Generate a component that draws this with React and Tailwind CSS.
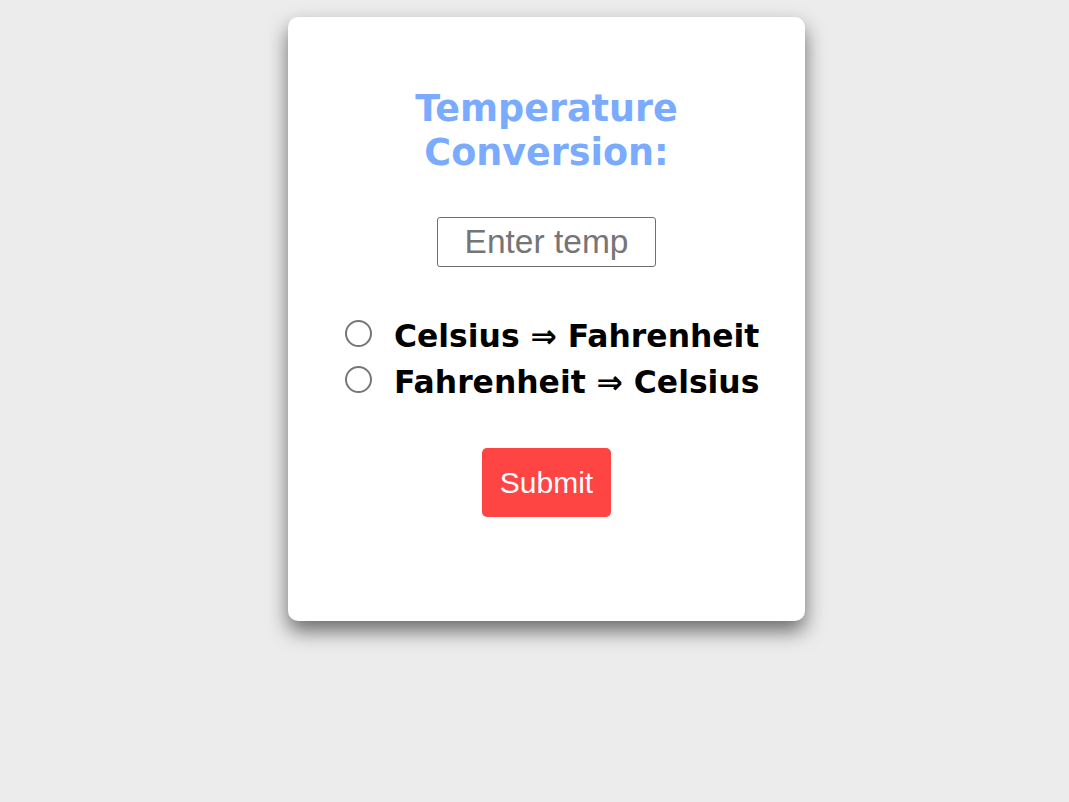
import React, { useState } from "react";

const options = [
  { id: "c2f", label: "Celsius ⇒ Fahrenheit" },
  { id: "f2c", label: "Fahrenheit ⇒ Celsius" },
];

const App = () => {
  const [temp, setTemp] = useState("");
  const [mode, setMode] = useState("");

  return (
    <div className="min-h-screen bg-[#ececec] pt-[17px] pl-[24px] flex justify-center items-start">
      <div className="w-[517px] bg-white rounded-[10px] shadow-[0_10px_20px_rgba(0,0,0,0.55)] pt-[70px] pb-[104px] flex flex-col items-center">
        <h1 className="w-[320px] text-center text-[36.5px] leading-[44px] font-bold text-[#7aabff] font-['DejaVu_Sans',sans-serif]">
          Temperature Conversion:
        </h1>

        <input
          type="text"
          value={temp}
          onChange={(e) => setTemp(e.target.value)}
          placeholder="Enter temp"
          className="mt-[42px] w-[219px] h-[50px] border border-[#6f6f6f] rounded-[3px] text-center text-[33.5px] font-['Liberation_Sans',sans-serif] placeholder:text-[#757575] outline-none"
        />

        <div className="mt-[46px] self-start ml-[57px] flex flex-col">
          {options.map((o) => (
            <label
              key={o.id}
              className="flex items-center gap-[22px] text-[31.4px] leading-[46px] font-bold text-black font-['DejaVu_Sans',sans-serif]"
            >
              <input
                type="radio"
                name="mode"
                checked={mode === o.id}
                onChange={() => setMode(o.id)}
                className="appearance-none w-[27px] h-[27px] mb-[6px] rounded-full border-2 border-[#767676] bg-white checked:border-[8px] checked:border-[#0075ff]"
              />
              <span>{o.label}</span>
            </label>
          ))}
        </div>

        <button className="mt-[43px] h-[69px] px-[18px] bg-[#ff4444] text-white rounded-[5px] text-[30px] font-['Liberation_Sans',sans-serif]">
          Submit
        </button>
      </div>
    </div>
  );
};

export default App;
